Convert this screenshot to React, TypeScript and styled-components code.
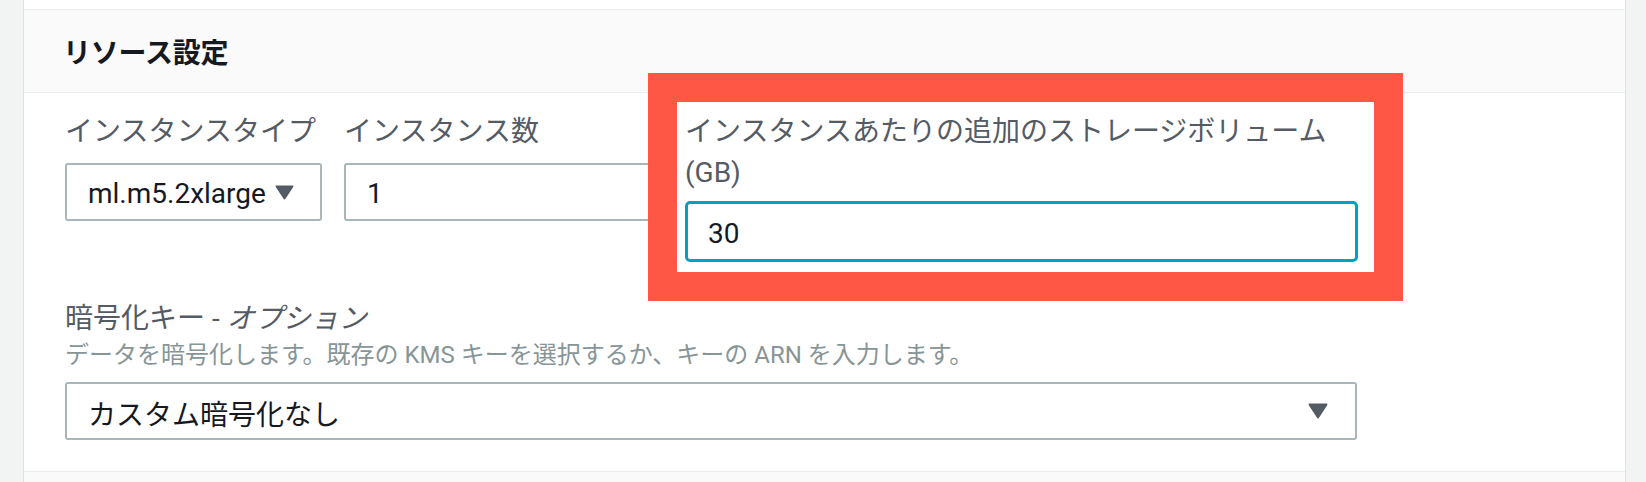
import React from 'react'
import styled, { createGlobalStyle } from 'styled-components'

const GlobalStyle = createGlobalStyle`
    html, body {
        margin: 0;
        padding: 0;
        height: 482px;
        overflow: hidden;
        background: #ffffff;
    }
    body {
        font-family: Roboto, "Noto Sans CJK JP", "Noto Sans", sans-serif;
        -webkit-font-smoothing: antialiased;
    }
    #root {
        height: 100%;
    }
`

// ▼ used by the select boxes
const Caret = ({ w, h }: { w: number; h: number }) => (
    <svg width={w} height={h} viewBox="0 0 20 16">
        <path d="M1.5 1.5 H18.5 L10 14.5 Z" fill="#545b64" stroke="#545b64" strokeWidth="2" strokeLinejoin="round" />
    </svg>
)

type FieldType = {
    label: React.ReactNode
    width: number
    children: React.ReactNode
}

const Field = (props: FieldType) => {
    return (
        <FieldBox $width={props.width}>
            <Label>{props.label}</Label>
            {props.children}
        </FieldBox>
    )
}

const App = () => {
    return (
        <Page>
            <GlobalStyle />
            <Rail $side="left" />
            <Main>
                <Panel>
                    <Header>
                        <Title>リソース設定</Title>
                    </Header>
                    <Body>
                        <Row>
                            <Field label="インスタンスタイプ" width={257}>
                                <Select>
                                    <span>ml.m5.2xlarge</span>
                                    <Caret w={19} h={15} />
                                </Select>
                            </Field>
                            <Field label="インスタンス数" width={319}>
                                <Input>1</Input>
                            </Field>
                            <Highlighted>
                                <Frame />
                                <FieldInner>
                                    <Label>インスタンスあたりの追加のストレージボリューム (GB)</Label>
                                    <Input $focused>30</Input>
                                </FieldInner>
                            </Highlighted>
                        </Row>
                        <Block>
                            <Label>
                                暗号化キー - <Optional>オプション</Optional>
                            </Label>
                            <Description>
                                データを暗号化します。既存の KMS キーを選択するか、キーの ARN を入力します。
                            </Description>
                            <Select $wide>
                                <span>カスタム暗号化なし</span>
                                <Caret w={20} h={16} />
                            </Select>
                        </Block>
                    </Body>
                </Panel>
                <NextPanel />
            </Main>
            <Rail $side="right" />
        </Page>
    )
}

export default App

const Page = styled.div`
    display: flex;
    height: 482px;
    width: 1646px;
`
const Rail = styled.div<{ $side: 'left' | 'right' }>`
    width: ${(p) => (p.$side === 'left' ? '23px' : '20px')};
    background-color: #f2f3f3;
    border-${(p) => (p.$side === 'left' ? 'right' : 'left')}: 1px solid #dfe3e3;
`
const Main = styled.div`
    flex: 1;
    display: flex;
    flex-direction: column;
    padding-top: 9px;
    background: #ffffff;
`
const Panel = styled.div`
    border-top: 1px solid #eaeded;
    border-bottom: 1px solid #eaeded;
`
const Header = styled.div`
    height: 82px;
    display: flex;
    align-items: center;
    padding-left: 39px;
    background-color: #fafafa;
    border-bottom: 1px solid #eaeded;
`
const Title = styled.h2`
    margin: 0;
    font-size: 28px;
    font-weight: 700;
    color: #16191f;
    letter-spacing: -0.2px;
`
const Body = styled.div`
    padding: 18px 40px 31px 41px;
    display: flex;
    flex-direction: column;
    gap: 36px;
`
const Row = styled.div`
    display: flex;
    align-items: flex-start;
    gap: 22px;
    width: 1293px;
`
const FieldBox = styled.div<{ $width: number }>`
    width: ${(p) => p.$width}px;
    display: flex;
    flex-direction: column;
`
const Label = styled.div`
    font-size: 28px;
    line-height: 41px;
    color: #545b64;
    margin-bottom: 11px;
    white-space: normal;
`
const Optional = styled.i`
    font-style: italic;
`
const Description = styled.div`
    font-size: 24px;
    line-height: 32px;
    color: #879596;
    margin-top: -11px;
    margin-bottom: 11px;
`
const Input = styled.div<{ $focused?: boolean }>`
    box-sizing: border-box;
    height: ${(p) => (p.$focused ? '61px' : '58px')};
    display: flex;
    align-items: center;
    padding-left: ${(p) => (p.$focused ? '20px' : '21px')};
    padding-top: 3px;
    font-size: 28px;
    color: #16191f;
    background: #ffffff;
    border: ${(p) => (p.$focused ? '3px solid #00a1c9' : '2px solid #aab7b8')};
    border-radius: ${(p) => (p.$focused ? '5px' : '3px')};
`
const Select = styled.div<{ $wide?: boolean }>`
    box-sizing: border-box;
    height: 58px;
    width: ${(p) => (p.$wide ? '1292px' : '100%')};
    display: flex;
    align-items: center;
    justify-content: space-between;
    padding: 3px ${(p) => (p.$wide ? '27px' : '26px')} 0 21px;
    font-size: 28px;
    color: #16191f;
    background: #ffffff;
    border: 2px solid #aab7b8;
    border-radius: 3px;
    svg {
        margin-top: -3px;
        flex-shrink: 0;
    }
`
const Block = styled.div`
    display: flex;
    flex-direction: column;
`
// the annotated field: a red frame drawn over the form
const Highlighted = styled.div`
    position: relative;
    width: 673px;
`
const Frame = styled.div`
    position: absolute;
    top: -38px;
    left: -37px;
    right: -45px;
    bottom: -39px;
    border: 29px solid #ff5745;
    background: #ffffff;
`
const FieldInner = styled.div`
    position: relative;
    display: flex;
    flex-direction: column;
    ${Label} {
        margin-bottom: 8px;
    }
`
const NextPanel = styled.div`
    flex: 1;
    background-color: #fafafa;
`
